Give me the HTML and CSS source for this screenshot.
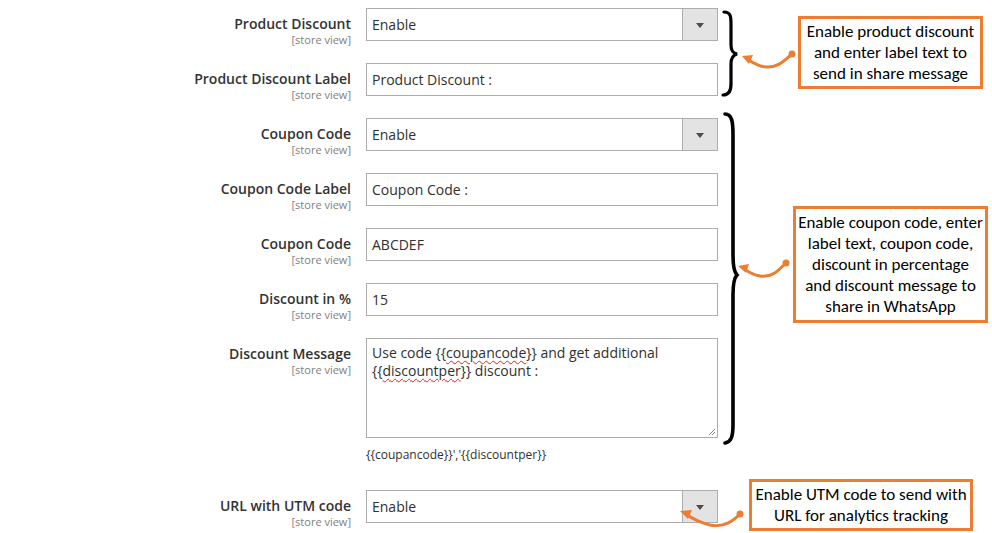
FILE: index.html
```html
<!DOCTYPE html>
<html>
<head>
<meta charset="utf-8">
<link rel="stylesheet" href="styles.css">
</head>
<body>
<div class="page">
  <div class="form">
    <div class="row">
      <div class="label"><span class="title">Product Discount</span><span class="scope">[store view]</span></div>
      <div class="control"><div class="select"><span class="value">Enable</span><span class="btn"><span class="tri"></span></span></div></div>
    </div>
    <div class="row">
      <div class="label"><span class="title">Product Discount Label</span><span class="scope">[store view]</span></div>
      <div class="control"><div class="input">Product Discount :</div></div>
    </div>
    <div class="row">
      <div class="label"><span class="title">Coupon Code</span><span class="scope">[store view]</span></div>
      <div class="control"><div class="select"><span class="value">Enable</span><span class="btn"><span class="tri"></span></span></div></div>
    </div>
    <div class="row">
      <div class="label"><span class="title">Coupon Code Label</span><span class="scope">[store view]</span></div>
      <div class="control"><div class="input">Coupon Code :</div></div>
    </div>
    <div class="row">
      <div class="label"><span class="title">Coupon Code</span><span class="scope">[store view]</span></div>
      <div class="control"><div class="input">ABCDEF</div></div>
    </div>
    <div class="row">
      <div class="label"><span class="title">Discount in %</span><span class="scope">[store view]</span></div>
      <div class="control"><div class="input">15</div></div>
    </div>
    <div class="row row-area">
      <div class="label"><span class="title">Discount Message</span><span class="scope">[store view]</span></div>
      <div class="control">
        <div class="textarea">Use code {{<span class="spell">coupancode</span>}} and get additional<br>{{<span class="spell">discountper</span>}} discount :
          <svg class="grip" width="8" height="8" viewBox="0 0 8 8"><path d="M7 1L1 7M7 4L4 7" stroke="#8a8a8a" stroke-width="1"/></svg>
        </div>
        <div class="note">{{coupancode}}','{{discountper}}</div>
      </div>
    </div>
    <div class="row">
      <div class="label"><span class="title">URL with UTM code</span><span class="scope">[store view]</span></div>
      <div class="control"><div class="select"><span class="value">Enable</span><span class="btn"><span class="tri"></span></span></div></div>
    </div>
  </div>

  <svg class="marks" width="992" height="533" viewBox="0 0 992 533">
    <g fill="none" stroke="#000" stroke-linecap="round">
      <path d="M724 12 C731 12 731 17 731 25 L731 45 C731 51 733 53 737 54 C733 55 731 58 731 64 L731 84 C731 91 729 95 723 95" stroke-width="3.2"/>
      <path d="M725 114 C732 114 733 122 733 135 L733 255 C733 266 734 272 737 275 C734 278 733 284 733 295 L733 425 C733 437 731 442 725 443" stroke-width="3.6"/>
    </g>
    <g fill="none" stroke="#ed7d31" stroke-width="3" stroke-linecap="round">
      <path d="M792 54 C785 60 778 68 766 67 C757 66 752 62 747 59"/>
      <path d="M786 263 C779 270 772 278 760 276 C752 275 747 271 743 268"/>
      <path d="M740 514 C734 520 725 528 710 525 C698 522 690 517 686 514"/>
    </g>
    <g fill="#ed7d31">
      <circle cx="792" cy="54" r="3.5"/>
      <circle cx="786" cy="263" r="3.5"/>
      <circle cx="740" cy="514" r="3.5"/>
      <path d="M742 56 L753 55 L749 64 Z"/>
      <path d="M738 266 L749 264 L746 273 Z"/>
      <path d="M680 511 L692 510 L688 519 Z"/>
    </g>
  </svg>

  <div class="callout c1">Enable product discount<br>and enter label text to<br>send in share message</div>
  <div class="callout c2">Enable coupon code, enter<br>label text, coupon code,<br>discount in percentage<br>and discount message to<br>share in WhatsApp</div>
  <div class="callout c3">Enable UTM code to send with<br>URL for analytics tracking</div>
</div>
</body>
</html>
```

FILE: styles.css
```css
* { box-sizing: border-box; }
html, body { margin: 0; padding: 0; background: #fff; }
body { font-family: "Open Sans", "Noto Sans", sans-serif; color: #303030; }
.page { position: relative; width: 992px; height: 533px; overflow: hidden; }
.form { padding-top: 8px; }
.row { display: grid; grid-template-columns: 351px 352px; column-gap: 15px; margin-bottom: 22px; align-items: start; }
.row-area { margin-bottom: 27px; }
.label { display: flex; flex-direction: column; align-items: flex-end; padding-top: 7px; height: 33px; }
.title { font-size: 14px; font-weight: 600; line-height: 18px; color: #333; white-space: nowrap; }
.scope { font-size: 11px; line-height: 13px; color: #808080; white-space: nowrap; }
.input, .select { height: 33px; border: 1px solid #adadad; background: #fff; font-size: 14px; line-height: 31px; padding: 0 5px; color: #303030; }
.select { display: flex; padding-right: 0; }
.select .value { flex: 1; }
.select .btn { width: 35px; height: 31px; background: #e3e3e3; border-left: 1px solid #adadad; display: flex; align-items: center; justify-content: center; }
.tri { width: 0; height: 0; border-left: 4px solid transparent; border-right: 4px solid transparent; border-top: 5px solid #514943; margin-top: 1px; }
.textarea { position: relative; height: 100px; border: 1px solid #adadad; font-size: 14px; line-height: 18px; padding: 5px 5px; color: #303030; }
.spell { text-decoration: underline wavy #e02020; text-decoration-thickness: 1px; text-underline-offset: 2px; }
.grip { position: absolute; right: 1px; bottom: 1px; }
.note { font-size: 12px; line-height: 16px; margin-top: 9px; color: #303030; }
.marks { position: absolute; left: 0; top: 0; }
.callout { position: absolute; border: 3px solid #ed7d31; background: #fff; font-family: "Carlito", "Lato", sans-serif; font-size: 17px; line-height: 21px; color: #000; text-align: center; display: flex; align-items: center; justify-content: center; white-space: nowrap; }
.c1 { left: 798px; top: 16px; width: 185px; height: 73px; }
.c2 { left: 793px; top: 206px; width: 195px; height: 117px; }
.c3 { left: 749px; top: 479px; width: 224px; height: 52px; }
```
